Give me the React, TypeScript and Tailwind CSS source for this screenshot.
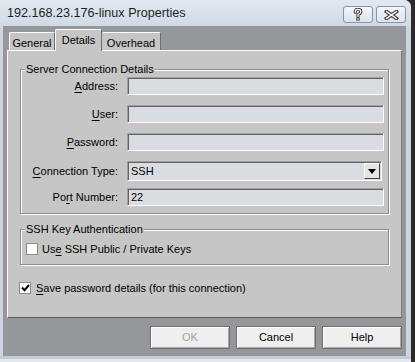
import React from 'react';

const inputCls =
  'bg-[#d9dde1] border border-t-[#a0a0a0] border-l-[#a0a0a0] border-r-white border-b-white shadow-[inset_1px_1px_0_#646464]';

function Key({ text, at }: { text: string; at: number }) {
  return (
    <>
      {text.slice(0, at)}
      <span className="underline underline-offset-[2px]">{text[at]}</span>
      {text.slice(at + 1)}
    </>
  );
}

function Field({ label, at, value, h = 'h-[18px]', combo }: { label: string; at: number; value?: string; h?: string; combo?: boolean }) {
  return (
    <div className={`flex items-center ${h}`}>
      <span className="w-[97px] text-right">
        <Key text={label} at={at} />
      </span>
      <div className={`ml-[9px] ${combo ? 'w-[255px] mr-[6px]' : 'flex-1 mr-[4px]'} h-full ${inputCls} flex items-center pl-[3px] relative`}>
        {value}
        {combo && (
          <div className="absolute right-[1px] top-[1px] w-[16px] h-[16px] bg-[#e4e4e4] border border-t-white border-l-white border-r-[#404040] border-b-[#404040] flex items-center justify-center">
            <svg width="8" height="5" viewBox="0 0 8 5">
              <polygon points="0,0 8,0 4,5" fill="#000" />
            </svg>
          </div>
        )}
      </div>
    </div>
  );
}

function Group({ title, className, children }: { title: string; className: string; children: React.ReactNode }) {
  return (
    <div className={`relative ml-[12px] w-[369px] border border-[#8d8d8d] shadow-[1px_1px_0_#fff,inset_1px_1px_0_#fff] ${className}`}>
      <span className="absolute left-[4px] top-[-8px] px-[1px] bg-[#c6c6c6] leading-[14px]">{title}</span>
      {children}
    </div>
  );
}

function Button({ label, disabled }: { label: string; disabled?: boolean }) {
  return (
    <div className={`w-[80px] h-[23px] flex items-center justify-center bg-[#efefef] border border-[#6f6f6f] shadow-[inset_1px_1px_0_#fff,inset_-1px_-1px_0_#a8a8a8] ${disabled ? 'text-[#a3a3a3]' : 'text-black'}`}>
      {label}
    </div>
  );
}

export default function App() {
  return (
    <div className="w-[415px] h-[362px] bg-[#2b2b2b] overflow-hidden font-['Liberation_Sans',Arial,sans-serif] text-[11px] text-black">
      <div className="w-[411px] h-[362px] bg-[#cdd6e0] rounded-tr-[7px] rounded-tl-[2px] flex flex-col">
        {/* Title bar */}
        <div className="h-[26px] flex items-center pl-[7px] pr-[5px] rounded-tr-[7px] bg-gradient-to-b from-[#e1e8f0] to-[#d0dae5]">
          <span className="text-[12.6px] text-[#1e1e1e] pt-[1px]">192.168.23.176-linux Properties</span>
          <div className="ml-auto flex gap-[3px] self-start mt-[6px]">
            <div className="w-[30px] h-[17px] rounded-[3px] border border-[#8594a8] bg-gradient-to-b from-[#f4f7fa] to-[#dbe3ec] flex items-center justify-center">
              <svg width="10" height="13" viewBox="0 0 10 13">
                <path d="M2.2 4.2 Q2.2 1.3 5 1.3 Q7.8 1.3 7.8 3.8 Q7.8 5.4 5 6.6 L5 8.4" fill="none" stroke="#3c3c3c" strokeWidth="3.2" strokeLinecap="round" />
                <rect x="3.3" y="9.6" width="3.4" height="3" fill="#3c3c3c" />
                <path d="M2.2 4.2 Q2.2 1.3 5 1.3 Q7.8 1.3 7.8 3.8 Q7.8 5.4 5 6.6 L5 8.4" fill="none" stroke="#fff" strokeWidth="1.2" strokeLinecap="round" />
                <rect x="4.3" y="10.4" width="1.4" height="1.4" fill="#fff" />
              </svg>
            </div>
            <div className="w-[30px] h-[17px] rounded-[3px] border border-[#8594a8] bg-gradient-to-b from-[#f4f7fa] to-[#dbe3ec] flex items-center justify-center">
              <svg width="15" height="10" viewBox="0 0 15 10">
                <path d="M2.5 1.5 L12.5 8.5 M12.5 1.5 L2.5 8.5" stroke="#3c3c3c" strokeWidth="3.6" strokeLinecap="square" />
                <path d="M2.5 1.5 L12.5 8.5 M12.5 1.5 L2.5 8.5" stroke="#fff" strokeWidth="1.4" strokeLinecap="square" />
              </svg>
            </div>
          </div>
        </div>

        {/* Body */}
        <div className="ml-[3px] w-[403px] h-[330px] bg-[#96979b] pt-[3px] pl-[4px] pr-[4px] flex flex-col">
          {/* Tabs */}
          <div className="h-[21px] flex items-end pl-[2px] relative z-10">
            <div className="w-[46px] h-[18px] bg-[#c6c6c6] border-t border-l border-r border-t-white border-l-white border-r-[#6e6e6e] rounded-t-[2px] flex justify-center pt-[2px]">
              General
            </div>
            <div className="w-[47px] h-[22px] -mb-[1px] bg-[#c6c6c6] border-t border-l border-r border-t-white border-l-white border-r-[#6e6e6e] rounded-t-[2px] flex justify-center pt-[2px]">
              Details
            </div>
            <div className="w-[59px] h-[18px] bg-[#c6c6c6] border-t border-r border-t-white border-r-[#6e6e6e] rounded-t-[2px] flex justify-center pt-[2px]">
              Overhead
            </div>
          </div>

          {/* Panel */}
          <div className="w-[395px] h-[268px] bg-[#c6c6c6] border border-t-white border-l-white border-r-[#7c7c7c] border-b-[#5e5e5e] flex flex-col">
            <Group title="Server Connection Details" className="mt-[18px] h-[145px] pt-[7px]">
              <div className="flex flex-col">
                <Field label="Address:" at={0} />
                <div className="h-[10px]" />
                <Field label="User:" at={0} />
                <div className="h-[10px]" />
                <Field label="Password:" at={0} />
                <div className="h-[10px]" />
                <Field label="Connection Type:" at={0} value="SSH" h="h-[20px]" combo />
                <div className="h-[7px]" />
                <Field label="Port Number:" at={2} value="22" />
              </div>
            </Group>

            <Group title="SSH Key Authentication" className="mt-[15px] h-[36px] pt-[11px] pl-[5px]">
              <div className="flex items-center">
                <div className="w-[12px] h-[12px] bg-white border border-[#8a8a8a]" />
                <span className="ml-[4px]">
                  <Key text="Use SSH Public / Private Keys" at={2} />
                </span>
              </div>
            </Group>

            <div className="mt-[15px] ml-[11px] flex items-center">
              <div className="w-[12px] h-[12px] bg-white border border-[#8a8a8a] flex items-center justify-center">
                <svg width="9" height="8" viewBox="0 0 9 8">
                  <polyline points="1,3.5 3.5,6.2 8,1" fill="none" stroke="#000" strokeWidth="2" />
                </svg>
              </div>
              <span className="ml-[5px]">
                <Key text="Save password details (for this connection)" at={0} />
              </span>
            </div>
          </div>

          {/* Buttons */}
          <div className="mt-[8px] flex justify-end gap-[6px]">
            <Button label="OK" disabled />
            <Button label="Cancel" />
            <Button label="Help" />
          </div>
        </div>

        {/* Bottom frame */}
        <div className="h-[3px] bg-[#c4ccd6]" />
        <div className="h-[3px] bg-[#e4e9ef]" />
      </div>
    </div>
  );
}
